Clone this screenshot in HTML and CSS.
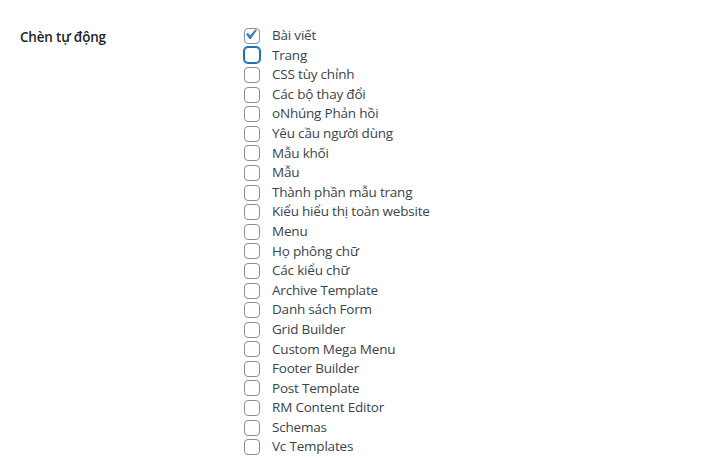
FILE: index.html
```html
<!DOCTYPE html>
<html lang="vi">
<head>
<meta charset="utf-8">
<title>Chèn tự động</title>
<link rel="stylesheet" href="styles.css">
</head>
<body>
<div class="form-row">
  <div class="th">Chèn tự động</div>
  <div class="td">
    <label class="opt"><span class="box checked"><svg viewBox="0 0 20 20" width="21" height="21"><path d="M14.83 4.89l1.34.94-5.81 8.38H9.02L5.78 9.67l1.34-1.25 2.57 2.4z" fill="#3582c4"/></svg></span><span>Bài viết</span></label>
    <label class="opt"><span class="box focus"></span><span>Trang</span></label>
    <label class="opt"><span class="box"></span><span>CSS tùy chỉnh</span></label>
    <label class="opt"><span class="box"></span><span>Các bộ thay đổi</span></label>
    <label class="opt"><span class="box"></span><span>oNhúng Phản hồi</span></label>
    <label class="opt"><span class="box"></span><span>Yêu cầu người dùng</span></label>
    <label class="opt"><span class="box"></span><span>Mẫu khối</span></label>
    <label class="opt"><span class="box"></span><span>Mẫu</span></label>
    <label class="opt"><span class="box"></span><span>Thành phần mẫu trang</span></label>
    <label class="opt"><span class="box"></span><span>Kiểu hiểu thị toàn website</span></label>
    <label class="opt"><span class="box"></span><span>Menu</span></label>
    <label class="opt"><span class="box"></span><span>Họ phông chữ</span></label>
    <label class="opt"><span class="box"></span><span>Các kiểu chữ</span></label>
    <label class="opt"><span class="box"></span><span>Archive Template</span></label>
    <label class="opt"><span class="box"></span><span>Danh sách Form</span></label>
    <label class="opt"><span class="box"></span><span>Grid Builder</span></label>
    <label class="opt"><span class="box"></span><span>Custom Mega Menu</span></label>
    <label class="opt"><span class="box"></span><span>Footer Builder</span></label>
    <label class="opt"><span class="box"></span><span>Post Template</span></label>
    <label class="opt"><span class="box"></span><span>RM Content Editor</span></label>
    <label class="opt"><span class="box"></span><span>Schemas</span></label>
    <label class="opt"><span class="box"></span><span>Vc Templates</span></label>
  </div>
</div>
</body>
</html>
```

FILE: styles.css
```css
html, body {
  margin: 0;
  padding: 0;
  background: #ffffff;
}
body {
  font-family: "Open Sans", "Noto Sans", "Liberation Sans", sans-serif;
  font-size: 13.5px;
  letter-spacing: -0.2px;
  color: #3c434a;
}
.form-row {
  display: flex;
  padding-top: 26px;
}
.th {
  width: 244px;
  padding-left: 20px;
  box-sizing: border-box;
  font-weight: 600;
  color: #1d2327;
  line-height: 19.6px;
  padding-top: 2px;
}
.td {
  display: flex;
  flex-direction: column;
}
.opt {
  display: flex;
  align-items: center;
  height: 19.6px;
  line-height: 19.6px;
}
.box {
  width: 16px;
  height: 16px;
  box-sizing: border-box;
  border: 1px solid #8c8f94;
  border-radius: 4px;
  background: #fff;
  margin-right: 12px;
  flex: none;
  display: flex;
  align-items: center;
  justify-content: center;
  overflow: visible;
}
.box svg {
  flex: none;
  margin: -3px 0 0 -4px;
}
.box.focus {
  border-color: #2271b1;
  box-shadow: 0 0 0 1px #2271b1;
}
```
